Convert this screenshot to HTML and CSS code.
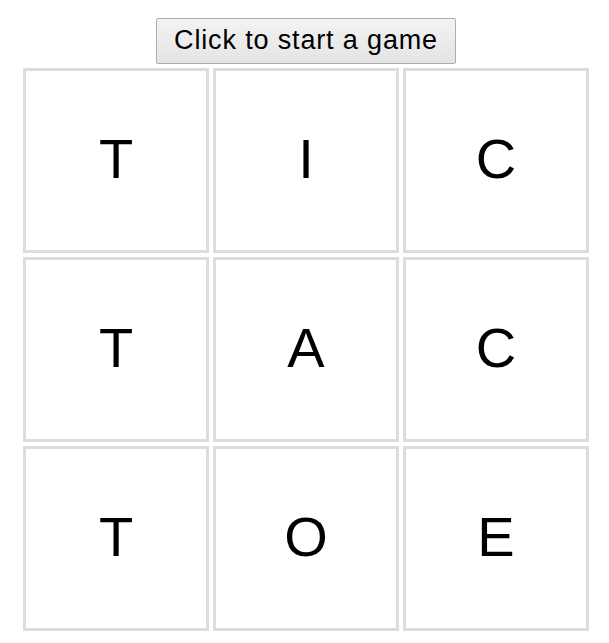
FILE: index.html
```html
<!DOCTYPE html>
<html>
<head>
<meta charset="utf-8">
<link rel="stylesheet" href="styles.css">
</head>
<body>
<div class="page">
  <button class="start">Click to start a game</button>
  <div class="board">
    <div class="cell">T</div>
    <div class="cell">I</div>
    <div class="cell">C</div>
    <div class="cell">T</div>
    <div class="cell">A</div>
    <div class="cell">C</div>
    <div class="cell">T</div>
    <div class="cell">O</div>
    <div class="cell">E</div>
  </div>
</div>
</body>
</html>
```
FILE: styles.css
```css
html, body {
  margin: 0;
  padding: 0;
  background: #ffffff;
}
.page {
  width: 566px;
  margin-left: 23px;
  padding-top: 18px;
  display: flex;
  flex-direction: column;
  align-items: center;
  font-family: "Liberation Sans", Arial, sans-serif;
}
.start {
  width: 300px;
  height: 46px;
  padding: 0 0 2px 0;
  font-family: "Liberation Sans", Arial, sans-serif;
  font-size: 27px;
  letter-spacing: 0.85px;
  color: #000;
  background: linear-gradient(#f3f3f3, #e4e4e4);
  border: 1px solid #adadad;
  border-radius: 2px;
}
.board {
  margin-top: 4px;
  display: grid;
  grid-template-columns: repeat(3, 186px);
  grid-auto-rows: 185px;
  gap: 4px 4px;
}
.cell {
  box-sizing: border-box;
  border: 3px solid #dcdcdc;
  padding-bottom: 4px;
  display: flex;
  align-items: center;
  justify-content: center;
  font-size: 56px;
  color: #000;
}
```
